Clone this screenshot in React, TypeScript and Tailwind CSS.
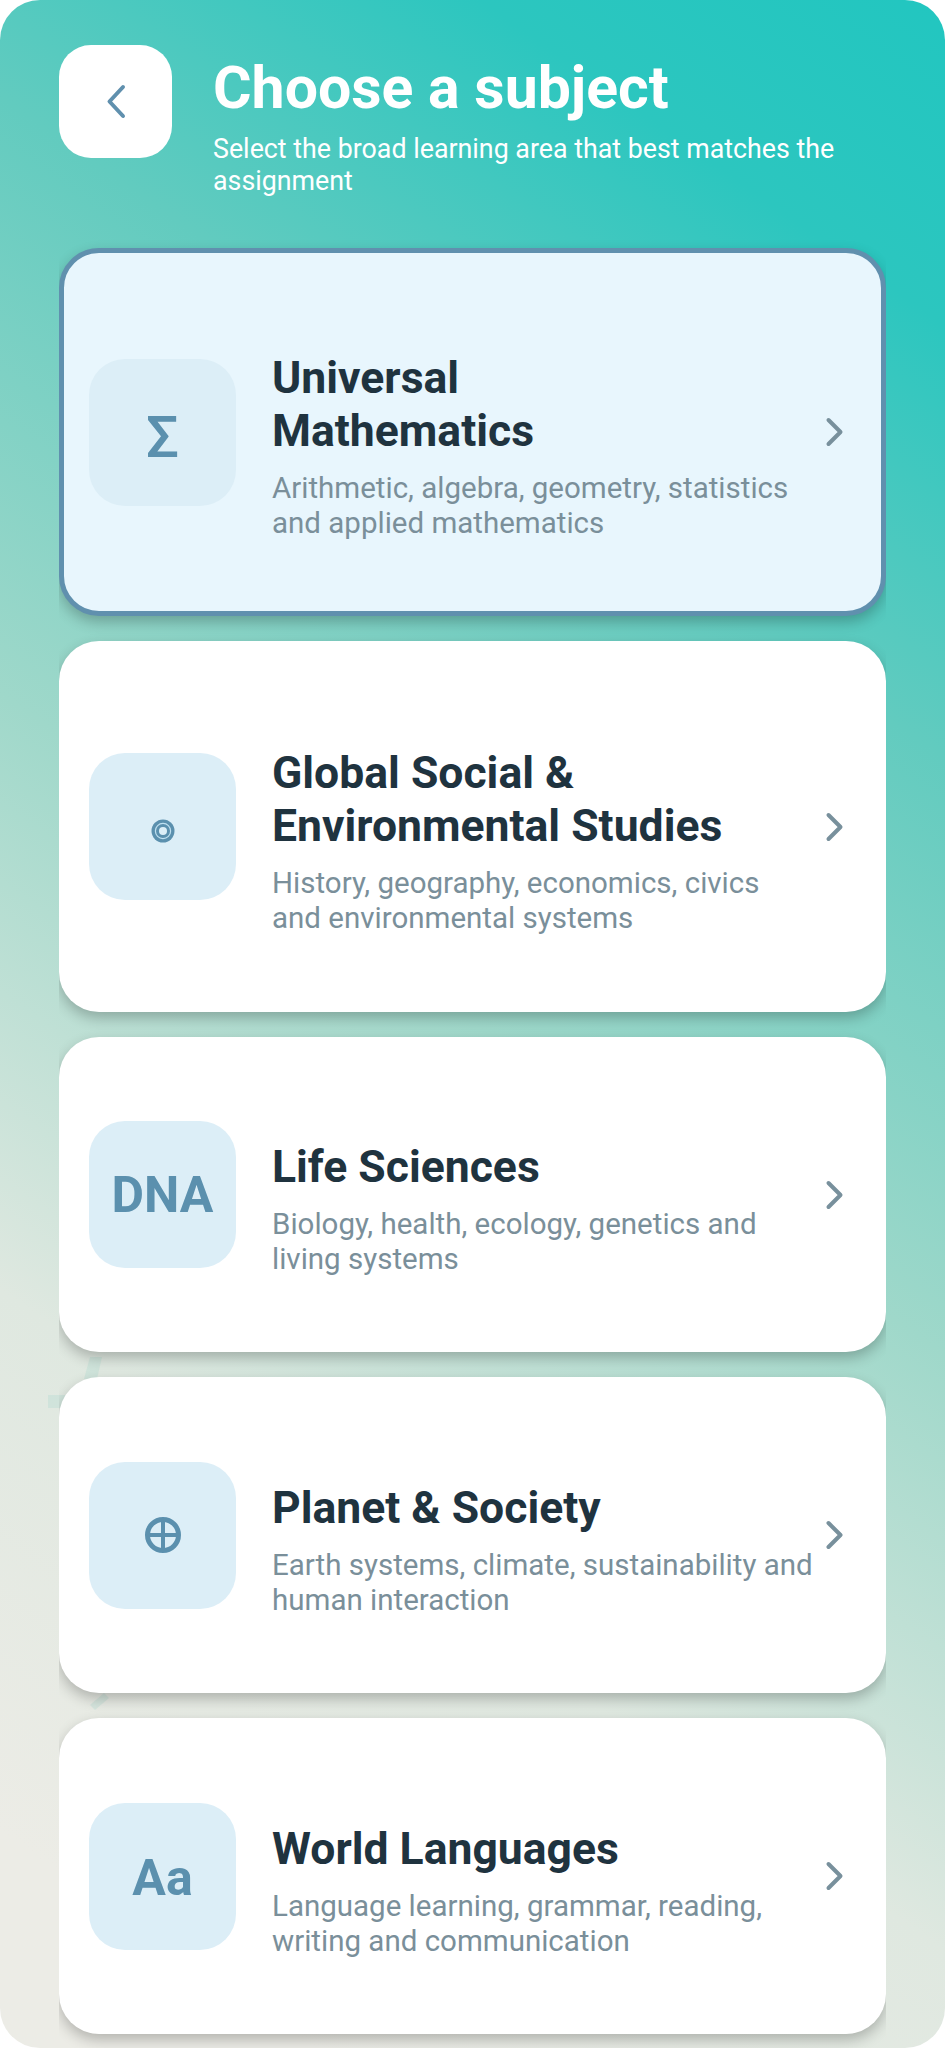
import type { ReactNode } from "react";

const subjects: { title: string; desc: string; icon: ReactNode; height: string; selected?: boolean }[] = [
  {
    title: "Universal\nMathematics",
    desc: "Arithmetic, algebra, geometry, statistics and applied mathematics",
    icon: <span className="relative top-[5px] text-[58px] leading-none font-medium">Σ</span>,
    height: "h-[368px]",
    selected: true,
  },
  {
    title: "Global Social &\nEnvironmental Studies",
    desc: "History, geography, economics, civics and environmental systems",
    icon: (
      <svg width="24" height="24" viewBox="0 0 24 24" className="relative top-[4px]">
        <circle cx="12" cy="12" r="11.5" fill="#5b90ae" />
        <circle cx="12" cy="12" r="7.6" fill="none" stroke="#bfe0f0" strokeWidth="1.2" />
        <circle cx="12" cy="12" r="4" fill="#dceef7" />
      </svg>
    ),
    height: "h-[371px]",
  },
  {
    title: "Life Sciences",
    desc: "Biology, health, ecology, genetics and living systems",
    icon: <span className="text-[50px] leading-none font-bold">DNA</span>,
    height: "h-[315px]",
  },
  {
    title: "Planet & Society",
    desc: "Earth systems, climate, sustainability and human interaction",
    icon: (
      <svg width="38" height="38" viewBox="0 0 38 38" fill="none" stroke="#5b90ae" strokeWidth="5">
        <circle cx="19" cy="19" r="15.5" />
        <path d="M3 19h32M19 3v32" strokeWidth="4" />
      </svg>
    ),
    height: "h-[316px]",
  },
  {
    title: "World Languages",
    desc: "Language learning, grammar, reading, writing and communication",
    icon: <span className="relative top-[2px] text-[50px] leading-none font-bold">Aa</span>,
    height: "h-[316px]",
  },
];

function SubjectCard({ title, desc, icon, height, selected }: (typeof subjects)[number]) {
  return (
    <div
      className={`flex items-center rounded-[40px] shadow-[0_6px_14px_rgba(0,0,0,0.24)] ${height} ${
        selected ? "border-[5px] border-[#6090ae] bg-[#e8f6fd] pl-[25px]" : "bg-white pl-[30px]"
      }`}
    >
      <div className="flex h-[147px] w-[147px] shrink-0 items-center justify-center rounded-[36px] bg-[#dceef7] text-[#5b90ae]">
        {icon}
      </div>
      <div className="ml-[36px] w-[541px] shrink-0 pt-[29px]">
        <h2 className="text-[44.5px] leading-[53px] font-bold whitespace-pre-line text-[#1f333f]">{title}</h2>
        <p className="mt-[13px] text-[29.5px] leading-[35px] text-[#7a8f9a]">{desc}</p>
      </div>
      <svg width="20" height="30" viewBox="0 0 20 30" fill="none" className="ml-[12px] shrink-0">
        <path d="M3.5 3 15.5 15 3.5 27" stroke="#78909c" strokeWidth="4" strokeLinecap="round" strokeLinejoin="round" />
      </svg>
    </div>
  );
}

export default function App() {
  return (
    <div className="h-[2048px] w-[945px] overflow-hidden bg-white font-['Roboto',sans-serif]">
      <div className="relative h-full overflow-hidden rounded-[40px] bg-[linear-gradient(215deg,#22c6c0_0%,#2cc6bf_12%,#62cbbf_28%,#9fd8ca_50%,#dfe8e0_72%,#ecece6_92%)] pt-[45px]">
        {/* faint marks showing between the cards */}
        <svg className="absolute top-[1340px] left-[40px]" width="80" height="400" viewBox="0 0 80 400" fill="#8fd0c4" opacity="0.2">
          <path d="M8 55h24v13H8zM50 17h12l-5 22H44zM50 365l14-12 5 5-14 12z" />
        </svg>

        <header className="relative flex px-[59px]">
          <button className="flex h-[113px] w-[113px] shrink-0 items-center justify-center rounded-[32px] bg-white">
            <svg width="20" height="35" viewBox="0 0 20 35" fill="none">
              <path d="M17 3 3.5 17.5 17 32" stroke="#6090ae" strokeWidth="4" strokeLinecap="round" strokeLinejoin="round" />
            </svg>
          </button>
          <div className="ml-[41px] pt-[8px] text-white">
            <h1 className="text-[59px] leading-[70px] font-bold">Choose a subject</h1>
            <p className="mt-[10px] w-[640px] text-[26.8px] leading-[32px]">
              Select the broad learning area that best matches the assignment
            </p>
          </div>
        </header>

        <main className="relative mx-[59px] mt-[51px] flex flex-col gap-[25px] overflow-x-clip">
          {subjects.map((s) => (
            <SubjectCard key={s.title} {...s} />
          ))}
        </main>
      </div>
    </div>
  );
}
